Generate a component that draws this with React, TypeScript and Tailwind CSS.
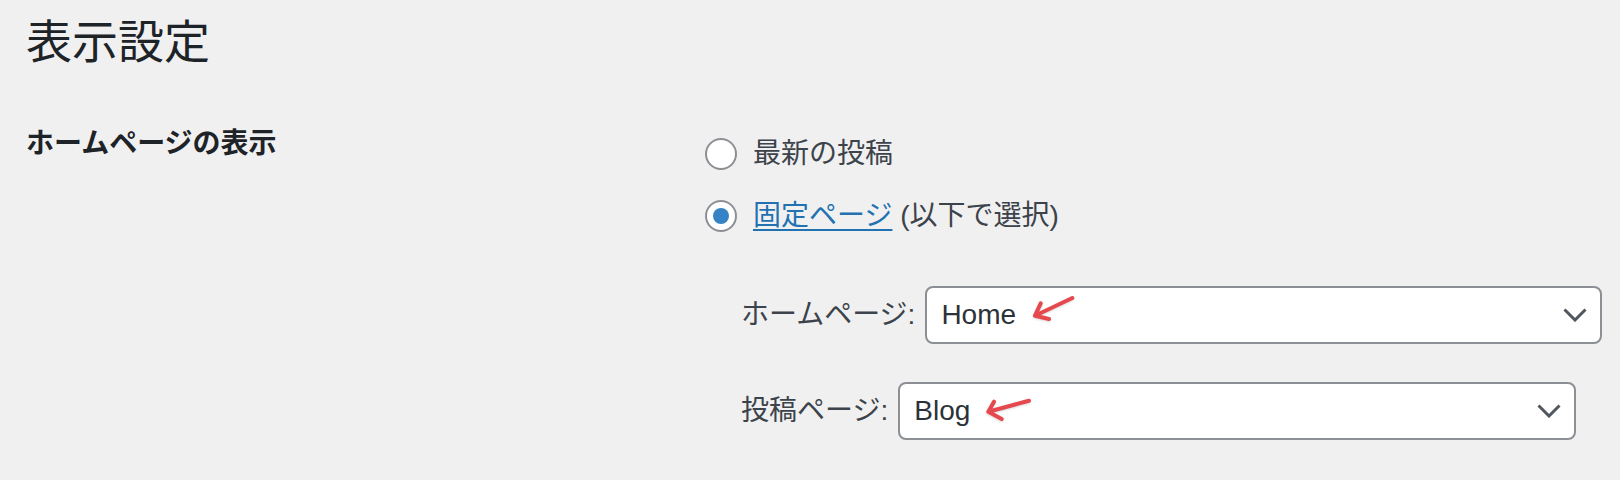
import React from "react";

function Chevron() {
  return (
    <svg width="24" height="14" viewBox="0 0 24 14" className="shrink-0">
      <path d="M1.5 1.5 L12 12 L22.5 1.5" fill="none" stroke="#50575e" strokeWidth="3" strokeLinecap="butt" strokeLinejoin="miter" />
    </svg>
  );
}

export default function App() {
  return (
    <div className="w-full h-[480px] overflow-hidden bg-[#f0f0f1] text-[#1d2327] font-['Liberation_Sans','Noto_Sans_CJK_JP',sans-serif] pl-[26px]">
      <h1 className="text-[46px] leading-[60px] font-normal pt-[12px] text-[#1d2327]">表示設定</h1>
      <div className="flex mt-[52px]">
        <div className="w-[679px] shrink-0 text-[28px] leading-[40px] font-bold text-[#1d2327]">
          ホームページの表示
        </div>
        <div className="flex flex-col pt-[14px] text-[28px] text-[#3c434a]">
          <div className="flex items-center h-[32px]">
            <span className="w-[32px] h-[32px] rounded-full border-2 border-[#8c8f94] bg-white shrink-0" />
            <span className="ml-[16px] leading-[32px]">最新の投稿</span>
          </div>
          <div className="flex items-center h-[32px] mt-[30px]">
            <span className="w-[32px] h-[32px] rounded-full border-2 border-[#8c8f94] bg-white shrink-0 flex items-center justify-center">
              <span className="w-[16px] h-[16px] rounded-full bg-[#3582c4]" />
            </span>
            <span className="ml-[16px] leading-[32px]">
              <a className="text-[#2271b1] underline decoration-2 underline-offset-[4px]">固定ページ</a> (以下で選択)
            </span>
          </div>
          <div className="flex items-center h-[58px] mt-[54px] pl-[36px]">
            <span className="shrink-0">ホームページ:</span>
            <div className="relative ml-[10px] w-[677px] h-[58px] rounded-[8px] border-2 border-[#8c8f94] bg-white flex items-center justify-between pl-[14px] pr-[13px] text-[#2c3338]">
              <span>Home</span>
              <Chevron />
              <svg width="50" height="34" viewBox="0 0 50 34" className="absolute left-[102px] top-[3px] drop-shadow-[0_1px_1px_rgba(0,0,0,0.15)]">
                <path d="M43.3 7 L6 24.7 M11.7 12.3 L6 24.7 L20 28" fill="none" stroke="#e5484d" strokeWidth="4" strokeLinecap="round" strokeLinejoin="round" />
              </svg>
            </div>
          </div>
          <div className="flex items-center h-[58px] mt-[38px] pl-[36px]">
            <span className="shrink-0">投稿ページ:</span>
            <div className="relative ml-[10px] w-[678px] h-[58px] rounded-[8px] border-2 border-[#8c8f94] bg-white flex items-center justify-between pl-[14px] pr-[13px] text-[#2c3338]">
              <span>Blog</span>
              <Chevron />
              <svg width="56" height="34" viewBox="0 0 56 34" className="absolute left-[79px] top-[7px] drop-shadow-[0_1px_1px_rgba(0,0,0,0.15)]">
                <path d="M50 9.7 L9.3 20.7 M15 10.7 L9.3 20.7 L22.7 28" fill="none" stroke="#e5484d" strokeWidth="4" strokeLinecap="round" strokeLinejoin="round" />
              </svg>
            </div>
          </div>
        </div>
      </div>
    </div>
  );
}
